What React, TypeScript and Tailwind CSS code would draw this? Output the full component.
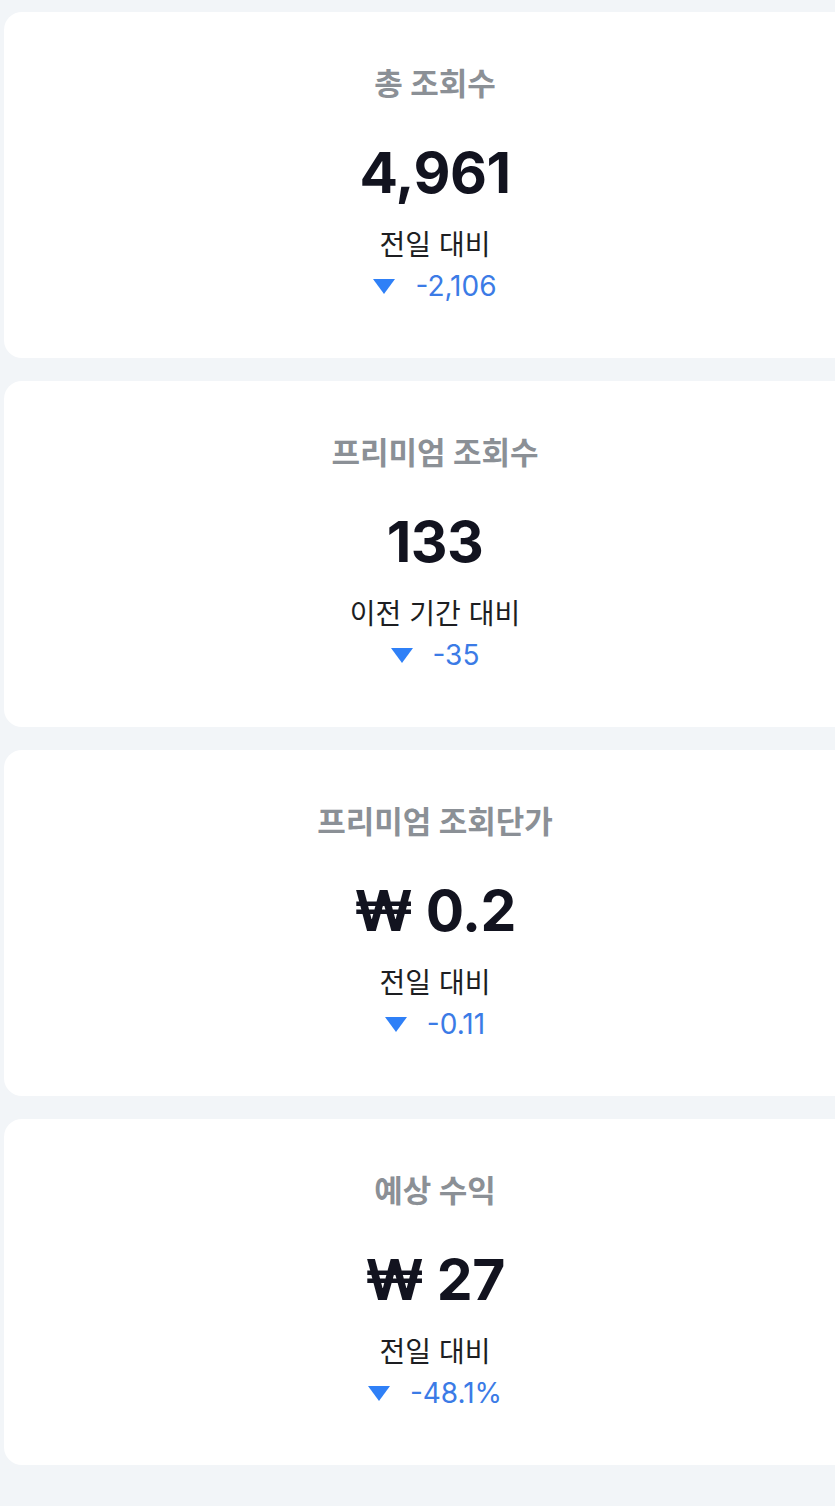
const stats = [
  { title: "총 조회수", value: "4,961", label: "전일 대비", delta: "-2,106" },
  { title: "프리미엄 조회수", value: "133", label: "이전 기간 대비", delta: "-35" },
  { title: "프리미엄 조회단가", value: "₩ 0.2", label: "전일 대비", delta: "-0.11" },
  { title: "예상 수익", value: "₩ 27", label: "전일 대비", delta: "-48.1%" },
]

const font = { fontFamily: '"Inter", "Noto Sans CJK KR", sans-serif' }

const StatCard = ({ title, value, label, delta }: (typeof stats)[number]) => (
  <div className="flex h-[346px] w-[862px] shrink-0 flex-col items-center justify-center rounded-[18px] bg-white">
    <div className="mb-[2px] text-[31px] font-bold leading-[36px] text-[#8b9096]">{title}</div>
    <div className="mt-[37px] text-[57px] font-bold leading-[64px] tracking-[-0.5px] text-[#12131f]">
      {value}
    </div>
    <div className="mt-[22px] text-[28px] leading-[36px] text-[#1d1e22]">{label}</div>
    <div className="mt-[5px] flex items-center gap-[20px] text-[28px] leading-[36px] text-[#3b7be6]">
      <svg width="22" height="15" viewBox="0 0 22 15" className="mt-[1px]">
        <path d="M0 0 H22 L11 15 Z" fill="#2f80f7" />
      </svg>
      <span>{delta}</span>
    </div>
  </div>
)

export default function App() {
  return (
    <div
      className="flex min-h-[1506px] w-[835px] flex-col gap-[23px] overflow-hidden bg-[#f2f5f8] pl-[4px] pt-[12px]"
      style={font}
    >
      {stats.map((s) => (
        <StatCard key={s.title} {...s} />
      ))}
    </div>
  )
}
